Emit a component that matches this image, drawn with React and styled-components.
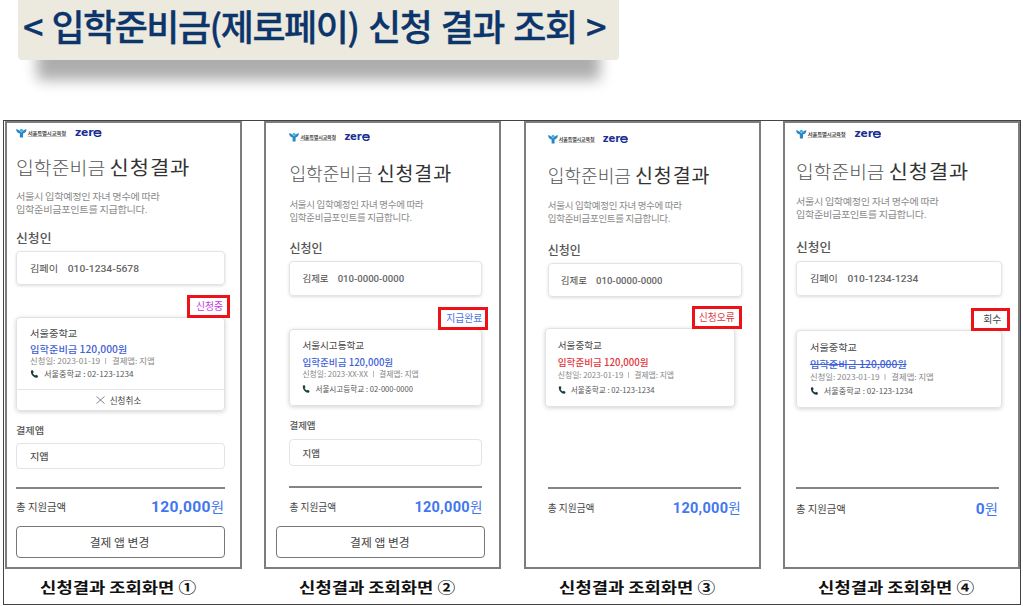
import { Fragment } from 'react';
import styled, { createGlobalStyle } from 'styled-components';

const screens = [
  {
    id: 1, mark: '①', left: 9, width: 209, stretch: 1.072,
    gaps: { logo: 5, title: 17, desc: 11, label: 16, input: 6, status: 10, pay: 12, payInput: 6, line: 18, total: 8 },
    inputHeight: 34, name: '김페이', phone: '010-1234-5678',
    status: '신청중', statusColor: '#c832e6', statusWidth: 43, statusShift: -5, statusPad: 4,
    card: { width: 209, shift: 0, height: 94, pad: 13, rows: [9, 2, 0, 1] },
    school: '서울중학교', color: '#3f62d6', date: '2023-01-19', tel: '02-123-1234', cancel: true,
    payHeight: 26, total: '120,000', lineWidth: 209, totalWidth: 208, buttonShift: 0,
  },
  {
    id: 2, mark: '②', left: 23, width: 193, stretch: 1,
    gaps: { logo: 9, title: 19, desc: 13, label: 18, input: 6, status: 11, pay: 12, payInput: 7, line: 20, total: 9 },
    inputHeight: 35, name: '김제로', phone: '010-0000-0000',
    status: '지급완료', statusColor: '#4a73e0', statusWidth: 50, statusShift: -6, statusPad: 3,
    card: { width: 193, shift: 0, height: 77, pad: 12, rows: [9, 3, 0, 3] },
    school: '서울시고등학교', color: '#3f62d6', date: '2023-XX-XX', tel: '02-000-0000',
    payHeight: 27, total: '120,000', lineWidth: 193, totalWidth: 193, buttonShift: -13,
  },
  {
    id: 3, mark: '③', left: 22, width: 194, stretch: 1,
    gaps: { logo: 11, title: 19, desc: 12, label: 19, input: 6, status: 9, line: 80, total: 9 },
    inputHeight: 34, name: '김제로', phone: '010-0000-0000',
    status: '신청오류', statusColor: '#e0363c', statusWidth: 50, statusShift: 0, statusPad: 4,
    card: { width: 190, shift: -3, height: 79, pad: 12, rows: [10, 3, 1, 3] },
    school: '서울중학교', color: '#e2363c', date: '2023-01-19', tel: '02-123-1234',
    total: '120,000', lineWidth: 193, totalWidth: 193,
  },
  {
    id: 4, mark: '④', left: 11, width: 206, stretch: 1.064,
    gaps: { logo: 6, title: 20, desc: 12, label: 20, input: 7, status: 12, line: 79, total: 10 },
    inputHeight: 35, name: '김페이', phone: '010-1234-1234',
    status: '회수', statusColor: '#444', statusWidth: 39, statusShift: -8, statusPad: 6,
    card: { width: 206, shift: 0, height: 78, pad: 13, rows: [10, 3, 1, 2] },
    school: '서울중학교', color: '#3f62d6', date: '2023-01-19', tel: '02-123-1234', struck: true,
    total: '0', lineWidth: 203, totalWidth: 202,
  },
];

function SeoulLogo() {
  return (
    <svg width="10" height="10" viewBox="0 0 10 10">
      <circle cx="5" cy="2.2" r="1.5" fill="#3fb4e0" />
      <path d="M0 1.2C1.8 1 3.4 2.4 5 4.4 6.6 2.4 8.2 1 10 1.2 9.6 3.8 8.4 5 6.6 5.6V9.6H3.6V5.6C1.6 5 .4 3.8 0 1.2Z" fill="#2a86c4" />
    </svg>
  );
}

function ZeroRing() {
  return (
    <svg width="8" height="7" viewBox="0 0 8 7">
      <path d="M.9 3.3A3.1 2.6 0 0 1 7.1 3.3Z" fill="none" stroke="#1c2f92" strokeWidth="1.5" />
      <path d="M.9 4.2C2.2 7.2 6 7 7.3 4.6" fill="none" stroke="#1c2f92" strokeWidth="1.5" />
    </svg>
  );
}

function PhoneIcon() {
  return (
    <svg width="8" height="8" viewBox="0 0 8 8">
      <path d="M1 .5 2.7.2 3.5 2.2 2.6 3.1C3 4.2 3.8 5.1 4.9 5.6L5.8 4.8 7.6 5.9 7 7.5C4 8.6 0 4.2 1 .5Z" fill="#143c3c" />
    </svg>
  );
}

function ResultScreen({ data }) {
  const { gaps, card, stretch } = data;
  const [padTop, amountGap, dateGap, telGap] = card.rows;

  return (
    <Screen $left={data.left} $width={data.width}>
      <Logos $gap={gaps.logo} $stretch={stretch}>
        <SeoulLogo />
        <SeoulName>서울특별시교육청</SeoulName>
        <ZeroLogo>zer<ZeroRing /></ZeroLogo>
      </Logos>

      <Title $gap={gaps.title} $stretch={stretch}>
        입학준비금 <strong>신청결과</strong>
      </Title>
      <Description $gap={gaps.desc} $stretch={stretch}>
        서울시 입학예정인 자녀 명수에 따라<br />
        입학준비금포인트를 지급합니다.
      </Description>

      <Label $gap={gaps.label} $stretch={stretch}>신청인</Label>
      <Field $gap={gaps.input} $height={data.inputHeight} $pad={card.pad} $raised>
        <FieldText $stretch={stretch}>
          {data.name}<PhoneNumber>{data.phone}</PhoneNumber>
        </FieldText>
      </Field>

      <Status $gap={gaps.status} $width={data.statusWidth} $shift={data.statusShift} $pad={data.statusPad} $color={data.statusColor}>
        {data.status}
      </Status>

      <Card $width={card.width} $shift={card.shift} $height={card.height}>
        <CardBody $pad={card.pad} $stretch={stretch}>
          <School $gap={padTop}>{data.school}</School>
          <Amount $gap={amountGap} $color={data.color} $struck={data.struck}>입학준비금 120,000원</Amount>
          <Meta $gap={dateGap}>
            <span>신청일: {data.date}</span>
            <Bar />
            <span>결제앱: 지앱</span>
          </Meta>
          <Tel $gap={telGap}><PhoneIcon />{data.school} : {data.tel}</Tel>
        </CardBody>
        {data.cancel && (
          <Cancel>
            <svg width="9" height="8" viewBox="0 0 9 8">
              <path d="M.5.5 8.5 7.5M8.5.5.5 7.5" stroke="#777" strokeWidth="0.9" />
            </svg>
            신청취소
          </Cancel>
        )}
      </Card>

      {data.payHeight && (
        <Fragment>
          <Label $gap={gaps.pay} $stretch={stretch} $small>결제앱</Label>
          <Field $gap={gaps.payInput} $height={data.payHeight} $pad={card.pad}>
            <FieldText $stretch={stretch} $dark>지앱</FieldText>
          </Field>
        </Fragment>
      )}

      <Line $gap={gaps.line} $width={data.lineWidth} />
      <Total $gap={gaps.total} $width={data.totalWidth}>
        <TotalLabel $stretch={stretch}>총 지원금액</TotalLabel>
        <TotalValue $stretch={stretch}><b>{data.total}</b>원</TotalValue>
      </Total>

      {data.payHeight && <ChangeButton $shift={data.buttonShift}>결제 앱 변경</ChangeButton>}
    </Screen>
  );
}

export default function App() {
  return (
    <Page>
      <GlobalStyle />
      <Banner>
        <BannerText>&lt; 입학준비금(제로페이) 신청 결과 조회 &gt;</BannerText>
      </Banner>
      <Board>
        {screens.map(screen => (
          <Column key={screen.id}>
            <ResultScreen data={screen} />
            <Caption>신청결과 조회화면 {screen.mark}</Caption>
          </Column>
        ))}
      </Board>
    </Page>
  );
}

const GlobalStyle = createGlobalStyle`
  * {
    box-sizing: border-box;
  }

  body {
    margin: 0;
    background: #fff;
    font-family: 'Noto Sans CJK KR', sans-serif;
    overflow: hidden;
  }
`;

const Page = styled.main`
  display: flex;
  flex-direction: column;
  width: 1023px;
  height: 606px;
  overflow: hidden;
`;

const Banner = styled.header`
  flex-shrink: 0;
  width: 601px;
  height: 100px;
  margin: -40px 0 0 18px;
  padding-top: 40px;
  background: #ece9df;
  border-radius: 4px;
  box-shadow: 0 39px 13px -19px rgba(0, 0, 0, 0.32);
`;

const BannerText = styled.h1`
  margin: 0;
  padding-left: 5px;
  font-size: 36px;
  font-weight: 500;
  line-height: 51px;
  letter-spacing: -1.5px;
  word-spacing: 2.8px;
  color: #0c356b;
  white-space: nowrap;
  -webkit-text-stroke: 0.3px #0c356b;
`;

const Board = styled.section`
  display: grid;
  flex-shrink: 0;
  grid-template-columns: 237px 237px 237px 237px;
  column-gap: 22.4px;
  width: 1018px;
  height: 485px;
  margin: 60px 0 0 3px;
  padding-left: 1px;
  border: 1px solid #444;
`;

const Column = styled.div`
  display: flex;
  flex-direction: column;
`;

const Screen = styled.div`
  display: flex;
  flex-direction: column;
  height: 448px;
  padding-left: ${({ $left }) => $left}px;
  padding-right: ${({ $left, $width }) => 233 - $left - $width}px;
  border: 2px solid #7d7d7d;
  white-space: nowrap;
`;

const Logos = styled.div`
  display: flex;
  align-items: center;
  height: 10px;
  margin-top: ${({ $gap }) => $gap}px;
  transform: scaleX(${({ $stretch }) => $stretch});
  transform-origin: left;
`;

const SeoulName = styled.span`
  width: 36px;
  margin-left: 1px;
  border-bottom: 1px solid #c4c4c4;
  font-size: 5px;
  font-weight: 700;
  line-height: 7px;
  letter-spacing: -0.15px;
  color: #444;
`;

const ZeroLogo = styled.span`
  display: flex;
  align-items: center;
  margin-left: 8px;
  font-family: 'DejaVu Sans', sans-serif;
  font-size: 10px;
  font-weight: 700;
  line-height: 10px;
  letter-spacing: -0.1px;
  color: #1c2f92;

  svg {
    margin-top: 1px;
  }
`;

const Title = styled.h2`
  height: 24px;
  margin: ${({ $gap }) => $gap}px 0 0;
  font-size: 18.1px;
  font-weight: 300;
  line-height: 24px;
  color: #555;
  transform: scaleX(${({ $stretch }) => $stretch});
  transform-origin: left;

  strong {
    font-size: 19.5px;
    font-weight: 400;
    letter-spacing: 0.9px;
    color: #333;
  }
`;

const Description = styled.p`
  margin: ${({ $gap }) => $gap}px 0 0;
  font-size: 9.5px;
  line-height: 12.5px;
  letter-spacing: -0.3px;
  color: #8a8a8a;
  transform: scaleX(${({ $stretch }) => $stretch});
  transform-origin: left;
`;

const Label = styled.div`
  height: 14px;
  margin-top: ${({ $gap }) => $gap}px;
  font-size: ${({ $small }) => ($small ? 9.5 : 12)}px;
  font-weight: 500;
  line-height: 14px;
  color: #555;
  transform: scaleX(${({ $stretch }) => $stretch});
  transform-origin: left;
`;

const Field = styled.div`
  display: flex;
  flex-shrink: 0;
  align-items: center;
  height: ${({ $height }) => $height}px;
  margin-top: ${({ $gap }) => $gap}px;
  padding-left: ${({ $pad }) => $pad}px;
  border: 1px solid #e4e4e4;
  border-radius: 4px;
  box-shadow: ${({ $raised }) => ($raised ? '0 1px 3px rgba(0, 0, 0, 0.14)' : 'none')};
`;

const FieldText = styled.span`
  font-size: 9.5px;
  font-weight: ${({ $dark }) => ($dark ? 500 : 400)};
  line-height: 14px;
  color: ${({ $dark }) => ($dark ? '#555' : '#4d4d4d')};
  transform: scaleX(${({ $stretch }) => $stretch});
  transform-origin: left;
`;

const PhoneNumber = styled.span`
  margin-left: 9px;
  font-family: Roboto, sans-serif;
  font-size: 9.6px;
  font-weight: 500;
  color: #666;
`;

const Status = styled.div`
  position: relative;
  z-index: 1;
  flex-shrink: 0;
  align-self: flex-end;
  width: ${({ $width }) => $width}px;
  height: 23px;
  margin: ${({ $gap, $shift }) => `${$gap}px ${$shift}px -1px 0`};
  padding-right: ${({ $pad }) => $pad}px;
  border: 3px solid #ec1218;
  background: #fff;
  font-size: 9.8px;
  line-height: 17px;
  text-align: right;
  color: ${({ $color }) => $color};
`;

const Card = styled.div`
  display: flex;
  flex-direction: column;
  flex-shrink: 0;
  width: ${({ $width }) => $width}px;
  height: ${({ $height }) => $height}px;
  margin-left: ${({ $shift }) => $shift}px;
  border: 1px solid #e2e2e2;
  border-radius: 4px;
  box-shadow: 0 1px 4px rgba(0, 0, 0, 0.18);
`;

const CardBody = styled.div`
  flex: 1;
  padding-left: ${({ $pad }) => $pad}px;
  transform: scaleX(${({ $stretch }) => $stretch});
  transform-origin: ${({ $pad }) => $pad}px 0;
`;

const School = styled.div`
  padding-top: ${({ $gap }) => $gap - 1}px;
  font-size: 9.6px;
  line-height: 14px;
  color: #444;
`;

const Amount = styled.div`
  margin-top: ${({ $gap }) => $gap}px;
  font-size: 9.6px;
  font-weight: 500;
  line-height: 14px;
  color: ${({ $color }) => $color};
  text-decoration: ${({ $struck }) => ($struck ? 'line-through' : 'none')};
`;

const Meta = styled.div`
  display: flex;
  align-items: center;
  height: 10px;
  margin-top: ${({ $gap }) => $gap}px;
  font-size: 7.8px;
  line-height: 10px;
  color: #888;
`;

const Bar = styled.i`
  width: 1px;
  height: 6px;
  margin: 0 5px;
  background: #bbb;
`;

const Tel = styled.div`
  display: flex;
  align-items: center;
  height: 14px;
  margin-top: ${({ $gap }) => $gap}px;
  font-size: 7.6px;
  line-height: 14px;
  color: #555;

  svg {
    margin-right: 5px;
  }
`;

const Cancel = styled.div`
  display: flex;
  align-items: center;
  justify-content: center;
  gap: 5px;
  height: 21px;
  padding-right: 4px;
  border-top: 1px solid #e4e4e4;
  font-size: 8.6px;
  line-height: 20px;
  color: #444;
`;

const Line = styled.div`
  flex-shrink: 0;
  width: ${({ $width }) => $width}px;
  height: 2px;
  margin-top: ${({ $gap }) => $gap}px;
  background: #858585;
`;

const Total = styled.div`
  display: flex;
  flex-shrink: 0;
  align-items: center;
  justify-content: space-between;
  width: ${({ $width }) => $width}px;
  height: 20px;
  margin-top: ${({ $gap }) => $gap}px;
`;

const TotalLabel = styled.span`
  font-size: 9.7px;
  color: #444;
  transform: scaleX(${({ $stretch }) => $stretch});
  transform-origin: left;
`;

const TotalValue = styled.span`
  font-size: 13.5px;
  line-height: 20px;
  color: #4377ee;
  transform: scaleX(${({ $stretch }) => $stretch});
  transform-origin: right;

  b {
    font-family: Roboto, sans-serif;
    font-size: 14.5px;
    letter-spacing: 0.3px;
  }
`;

const ChangeButton = styled.button`
  flex-shrink: 0;
  width: 209px;
  height: 32px;
  margin: 9px 0 0 ${({ $shift }) => $shift}px;
  padding: 0 2px 1px 0;
  border: 1.5px solid #777;
  border-radius: 4px;
  background: #fff;
  font-family: inherit;
  font-size: 11.8px;
  color: #444;
`;

const Caption = styled.div`
  align-self: center;
  margin: 7px 11px 0 0;
  font-size: 15px;
  font-weight: 700;
  line-height: 22px;
  color: #111;
  white-space: nowrap;
  transform: scaleX(1.18);
`;
